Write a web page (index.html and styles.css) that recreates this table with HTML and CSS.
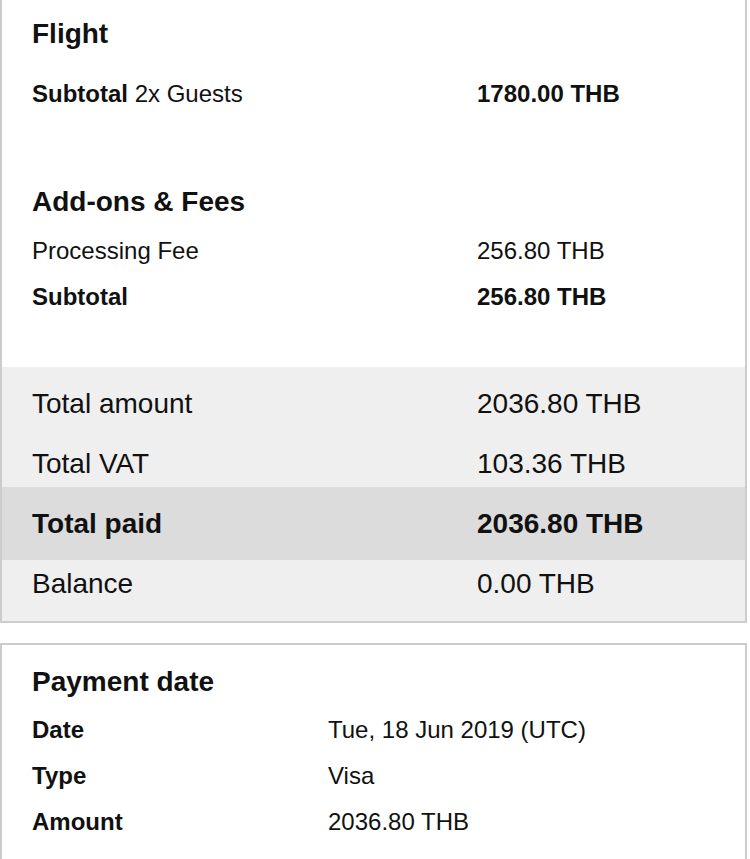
FILE: index.html
```html
<!DOCTYPE html>
<html lang="en">
<head>
<meta charset="utf-8">
<title>Booking summary</title>
<link rel="stylesheet" href="styles.css">
</head>
<body>
<div class="card summary">
  <section class="section flight">
    <h2 class="heading">Flight</h2>
    <div class="row"><span class="label"><b>Subtotal</b> 2x Guests</span><span class="value strong">1780.00 THB</span></div>
  </section>
  <section class="section fees">
    <h2 class="heading">Add-ons &amp; Fees</h2>
    <div class="row"><span class="label">Processing Fee</span><span class="value">256.80 THB</span></div>
    <div class="row strong"><span class="label">Subtotal</span><span class="value">256.80 THB</span></div>
  </section>
  <div class="totals">
    <div class="total-row"><span class="label">Total amount</span><span class="value">2036.80 THB</span></div>
    <div class="total-row"><span class="label">Total VAT</span><span class="value">103.36 THB</span></div>
    <div class="total-row paid"><span class="label">Total paid</span><span class="value">2036.80 THB</span></div>
    <div class="total-row balance"><span class="label">Balance</span><span class="value">0.00 THB</span></div>
  </div>
</div>
<div class="card payment">
  <section class="section pay">
    <h2 class="heading">Payment date</h2>
    <div class="row"><span class="label strong">Date</span><span class="value">Tue, 18 Jun 2019 (UTC)</span></div>
    <div class="row"><span class="label strong">Type</span><span class="value">Visa</span></div>
    <div class="row"><span class="label strong">Amount</span><span class="value">2036.80 THB</span></div>
  </section>
</div>
</body>
</html>
```
FILE: styles.css
```css
html, body {
  margin: 0;
  padding: 0;
  background: #ffffff;
}
body {
  font-family: "Liberation Sans", Arial, Helvetica, sans-serif;
  color: #111111;
  width: 750px;
}
.card {
  width: 743px;
  border: 2px solid #cccccc;
  background: #ffffff;
}
.summary {
  border-top: none;
}
.payment {
  margin-top: 20px;
  padding-bottom: 40px;
}
.section {
  padding: 0 30px;
}
.heading {
  margin: 0;
  font-size: 28px;
  line-height: 32px;
  font-weight: bold;
}
.row {
  display: grid;
  grid-template-columns: 445px 1fr;
  font-size: 24px;
  line-height: 46px;
}
.pay .row {
  grid-template-columns: 296px 1fr;
}
.strong {
  font-weight: bold;
}
.flight {
  padding-top: 18px;
}
.flight .heading {
  margin-bottom: 21px;
}
.fees {
  margin-top: 69px;
  padding-bottom: 47px;
}
.fees .heading,
.pay .heading {
  margin-bottom: 9.5px;
}
.pay {
  padding-top: 21.5px;
}
.pay .heading {
  margin-bottom: 9px;
}
.totals {
  background: #efefef;
}
.total-row {
  display: grid;
  grid-template-columns: 445px 1fr;
  padding: 21.5px 30px 6.5px;
  font-size: 28px;
  line-height: 32px;
}
.total-row.paid {
  background: #dcdcdc;
  font-weight: bold;
  padding: 21.5px 30px 19.5px;
}
.total-row.balance {
  padding: 8.5px 30px 20.5px;
}
```
